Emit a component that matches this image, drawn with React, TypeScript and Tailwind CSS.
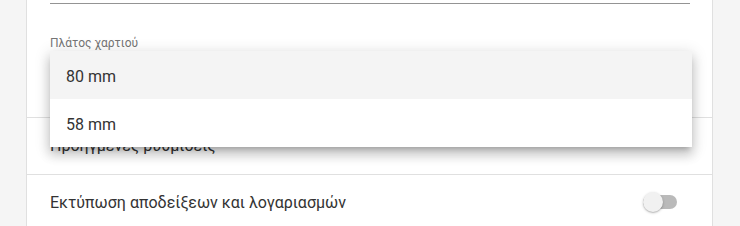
import React from "react";

export default function App() {
  return (
    <div className="w-[740px] h-[226px] bg-[#f5f5f5] overflow-hidden font-['Roboto',sans-serif]">
      <div className="relative ml-[26px] w-[687px] h-full bg-white border-x border-[#e0e0e0]">
        <div className="pl-[23px] pr-[22px]">
          <div className="h-[3px]" />
          <div className="h-px bg-[#949494]" />
          <div className="pt-[31px] pb-[66px]">
            <div className="text-[12px] leading-[16px] text-[#757575]">Πλάτος χαρτιού</div>
          </div>
        </div>
        <div className="h-px bg-[#e0e0e0]" />
        <div className="h-[56px] flex items-center pl-[23px] text-[16px] text-[#333]">
          Προηγμένες ρυθμίσεις
        </div>
        <div className="h-px bg-[#e0e0e0]" />
        <div className="h-[56px] flex items-center justify-between pl-[23px] pr-[35px] text-[16px] text-[#333]">
          <span>Εκτύπωση αποδείξεων και λογαριασμών</span>
          <div className="relative w-[34px] h-[20px] -mt-[2px]">
            <div className="absolute left-0 top-[3px] w-[34px] h-[14px] rounded-full bg-[#bababa]" />
            <div className="absolute left-0 top-0 w-[20px] h-[20px] rounded-full bg-[#f1f1f1] shadow-[0_1px_3px_rgba(0,0,0,0.2),0_1px_1px_rgba(0,0,0,0.14)]" />
          </div>
        </div>

        <div className="absolute top-[51px] left-[23px] w-[642px] bg-white shadow-[0_5px_5px_-3px_rgba(0,0,0,0.2),0_8px_10px_1px_rgba(0,0,0,0.14),0_3px_14px_2px_rgba(0,0,0,0.12)]">
          <div className="h-[48px] flex items-center pt-[4px] px-[16px] bg-[#f4f4f4] text-[16px] text-[#333]">80 mm</div>
          <div className="h-[48px] flex items-center pt-[3px] px-[16px] bg-white text-[16px] text-[#333]">58 mm</div>
        </div>
      </div>
    </div>
  );
}
